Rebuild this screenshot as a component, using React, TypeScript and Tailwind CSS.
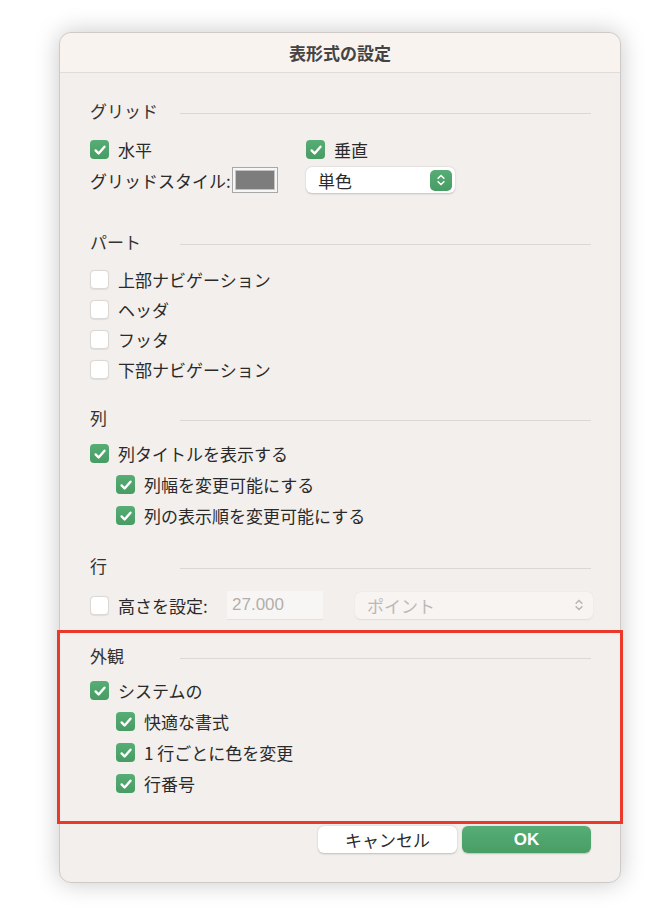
import React from 'react';

const font = { fontFamily: '"Noto Sans CJK JP", "Noto Sans", sans-serif' };

function CheckMark() {
  return (
    <svg viewBox="0 0 18 18" className="w-[18px] h-[18px]" fill="none">
      <path d="M4.6 9.4l3 3.1 5.9-6.8" stroke="white" strokeWidth={2.4} strokeLinecap="round" strokeLinejoin="round" />
    </svg>
  );
}

function Checkbox({ checked }: { checked: boolean }) {
  if (checked) {
    return (
      <div className="w-[19px] h-[19px] rounded-[4px] bg-gradient-to-b from-[#56ad75] to-[#479c63] flex items-center justify-center shrink-0">
        <CheckMark />
      </div>
    );
  }
  return (
    <div className="w-[19px] h-[19px] rounded-[4px] bg-white border border-[#dcd8d5] shadow-[0_0.5px_1px_rgba(0,0,0,0.08)] shrink-0" />
  );
}

function CheckRow({ label, checked, indent = false }: { label: string; checked: boolean; indent?: boolean }) {
  return (
    <div className={`h-[31px] flex items-center gap-[9px] ${indent ? 'pl-[26px]' : ''}`}>
      <Checkbox checked={checked} />
      <span className="text-[#2a2a2a]">{label}</span>
    </div>
  );
}

function SectionHeader({ title }: { title: string }) {
  return (
    <div className="h-[24px] flex items-center">
      <span className="w-[90px] text-[#333]">{title}</span>
      <div className="flex-1 h-px bg-[#dcd7d4] mt-[6px]" />
    </div>
  );
}

function Chevrons({ color }: { color: string }) {
  return (
    <svg viewBox="0 0 12 16" className="w-[10px] h-[14px]" fill="none">
      <path d="M2.5 6l3.5-3.5L9.5 6" stroke={color} strokeWidth={1.8} strokeLinecap="round" strokeLinejoin="round" />
      <path d="M2.5 10l3.5 3.5L9.5 10" stroke={color} strokeWidth={1.8} strokeLinecap="round" strokeLinejoin="round" />
    </svg>
  );
}

export default function App() {
  return (
    <div className="min-h-screen bg-white pt-[32px] pl-[59px]" style={font}>
      <div className="w-[562px] rounded-[12px] bg-[#f3efec] border border-[#cfcac7] shadow-[0_0_24px_rgba(0,0,0,0.22)] text-[17px] leading-none">
        <div className="h-[40px] flex items-center justify-center bg-[#f9f3f0] border-b border-[#e2dcd8] rounded-t-[12px]">
          <span className="font-bold text-[#444] text-[17px]">表形式の設定</span>
        </div>

        <div className="pl-[30px] pr-[29px]">
          <div className="pt-[25px]">
            <SectionHeader title="グリッド" />
            <div className="mt-[12px] h-[31px] flex items-center">
              <div className="w-[216px] flex items-center gap-[9px]">
                <Checkbox checked />
                <span className="text-[#2a2a2a]">水平</span>
              </div>
              <div className="flex items-center gap-[9px]">
                <Checkbox checked />
                <span className="text-[#2a2a2a]">垂直</span>
              </div>
            </div>
            <div className="h-[30px] flex items-center">
              <span className="w-[142px] text-[#2a2a2a]">グリッドスタイル:</span>
              <div className="w-[46px] h-[26px] border border-[#a8a8a8] bg-[#f6f6f6] p-[2px]">
                <div className="w-full h-full bg-[#7d7d7d] border border-[#c4c4c4]" />
              </div>
              <div className="ml-[28px] w-[149px] h-[26px] rounded-[6px] bg-white shadow-[0_0.5px_2px_rgba(0,0,0,0.2)] flex items-center justify-between pl-[12px] pr-[3px]">
                <span className="text-[#2a2a2a]">単色</span>
                <div className="w-[22px] h-[21px] rounded-[5px] bg-gradient-to-b from-[#56ad75] to-[#479c63] flex items-center justify-center">
                  <Chevrons color="white" />
                </div>
              </div>
            </div>
          </div>

          <div className="pt-[34px]">
            <SectionHeader title="パート" />
            <div className="mt-[11px]">
              <div className="h-[30px] flex items-center gap-[9px]"><Checkbox checked={false} /><span className="text-[#2a2a2a]">上部ナビゲーション</span></div>
              <div className="h-[30px] flex items-center gap-[9px]"><Checkbox checked={false} /><span className="text-[#2a2a2a]">ヘッダ</span></div>
              <div className="h-[30px] flex items-center gap-[9px]"><Checkbox checked={false} /><span className="text-[#2a2a2a]">フッタ</span></div>
              <div className="h-[30px] flex items-center gap-[9px]"><Checkbox checked={false} /><span className="text-[#2a2a2a]">下部ナビゲーション</span></div>
            </div>
          </div>

          <div className="pt-[21px]">
            <SectionHeader title="列" />
            <div className="mt-[9px]">
              <CheckRow label="列タイトルを表示する" checked />
              <CheckRow label="列幅を変更可能にする" checked indent />
              <CheckRow label="列の表示順を変更可能にする" checked indent />
            </div>
          </div>

          <div className="pt-[22px]">
            <SectionHeader title="行" />
            <div className="mt-[13px] h-[30px] flex items-center">
              <Checkbox checked={false} />
              <span className="ml-[9px] w-[109px] text-[#2a2a2a]">高さを設定:</span>
              <div className="w-[96px] h-[29px] bg-[#f8f6f5] border-b border-[#e4e0dd] flex items-center pl-[5px]">
                <span className="text-[#b3aeab]" style={{ fontFamily: '"Liberation Sans", sans-serif', fontSize: '17px' }}>27.000</span>
              </div>
              <div className="ml-[32px] flex-1 -mr-[2px] h-[27px] rounded-[6px] bg-[#f7f4f2] shadow-[0_0.5px_1.5px_rgba(0,0,0,0.08)] flex items-center justify-between pl-[12px] pr-[9px]">
                <span className="text-[#bdb8b5]">ポイント</span>
                <Chevrons color="#b9b5b2" />
              </div>
            </div>
          </div>
        </div>

        <div className="mt-[10px] -mx-[3px] border-[3px] border-[#e8392b] pl-[30px] pr-[29px] pt-[10px] pb-[22px]">
          <SectionHeader title="外観" />
          <div className="mt-[8px]">
            <CheckRow label="システムの" checked />
            <CheckRow label="快適な書式" checked indent />
            <CheckRow label="1 行ごとに色を変更" checked indent />
            <CheckRow label="行番号" checked indent />
          </div>
        </div>

        <div className="mt-[2px] pr-[29px] pb-[29px] flex justify-end gap-[5px]">
          <button className="w-[139px] h-[27px] rounded-[6px] bg-white shadow-[0_0.5px_2px_rgba(0,0,0,0.22)] text-[#2a2a2a] text-[17px]">キャンセル</button>
          <button className="w-[129px] h-[27px] rounded-[6px] bg-gradient-to-b from-[#56ad75] to-[#489e65] shadow-[0_0.5px_1.5px_rgba(0,0,0,0.2)] text-white font-bold text-[17px]" style={{ fontFamily: '"Liberation Sans", sans-serif' }}>OK</button>
        </div>
      </div>
    </div>
  );
}
